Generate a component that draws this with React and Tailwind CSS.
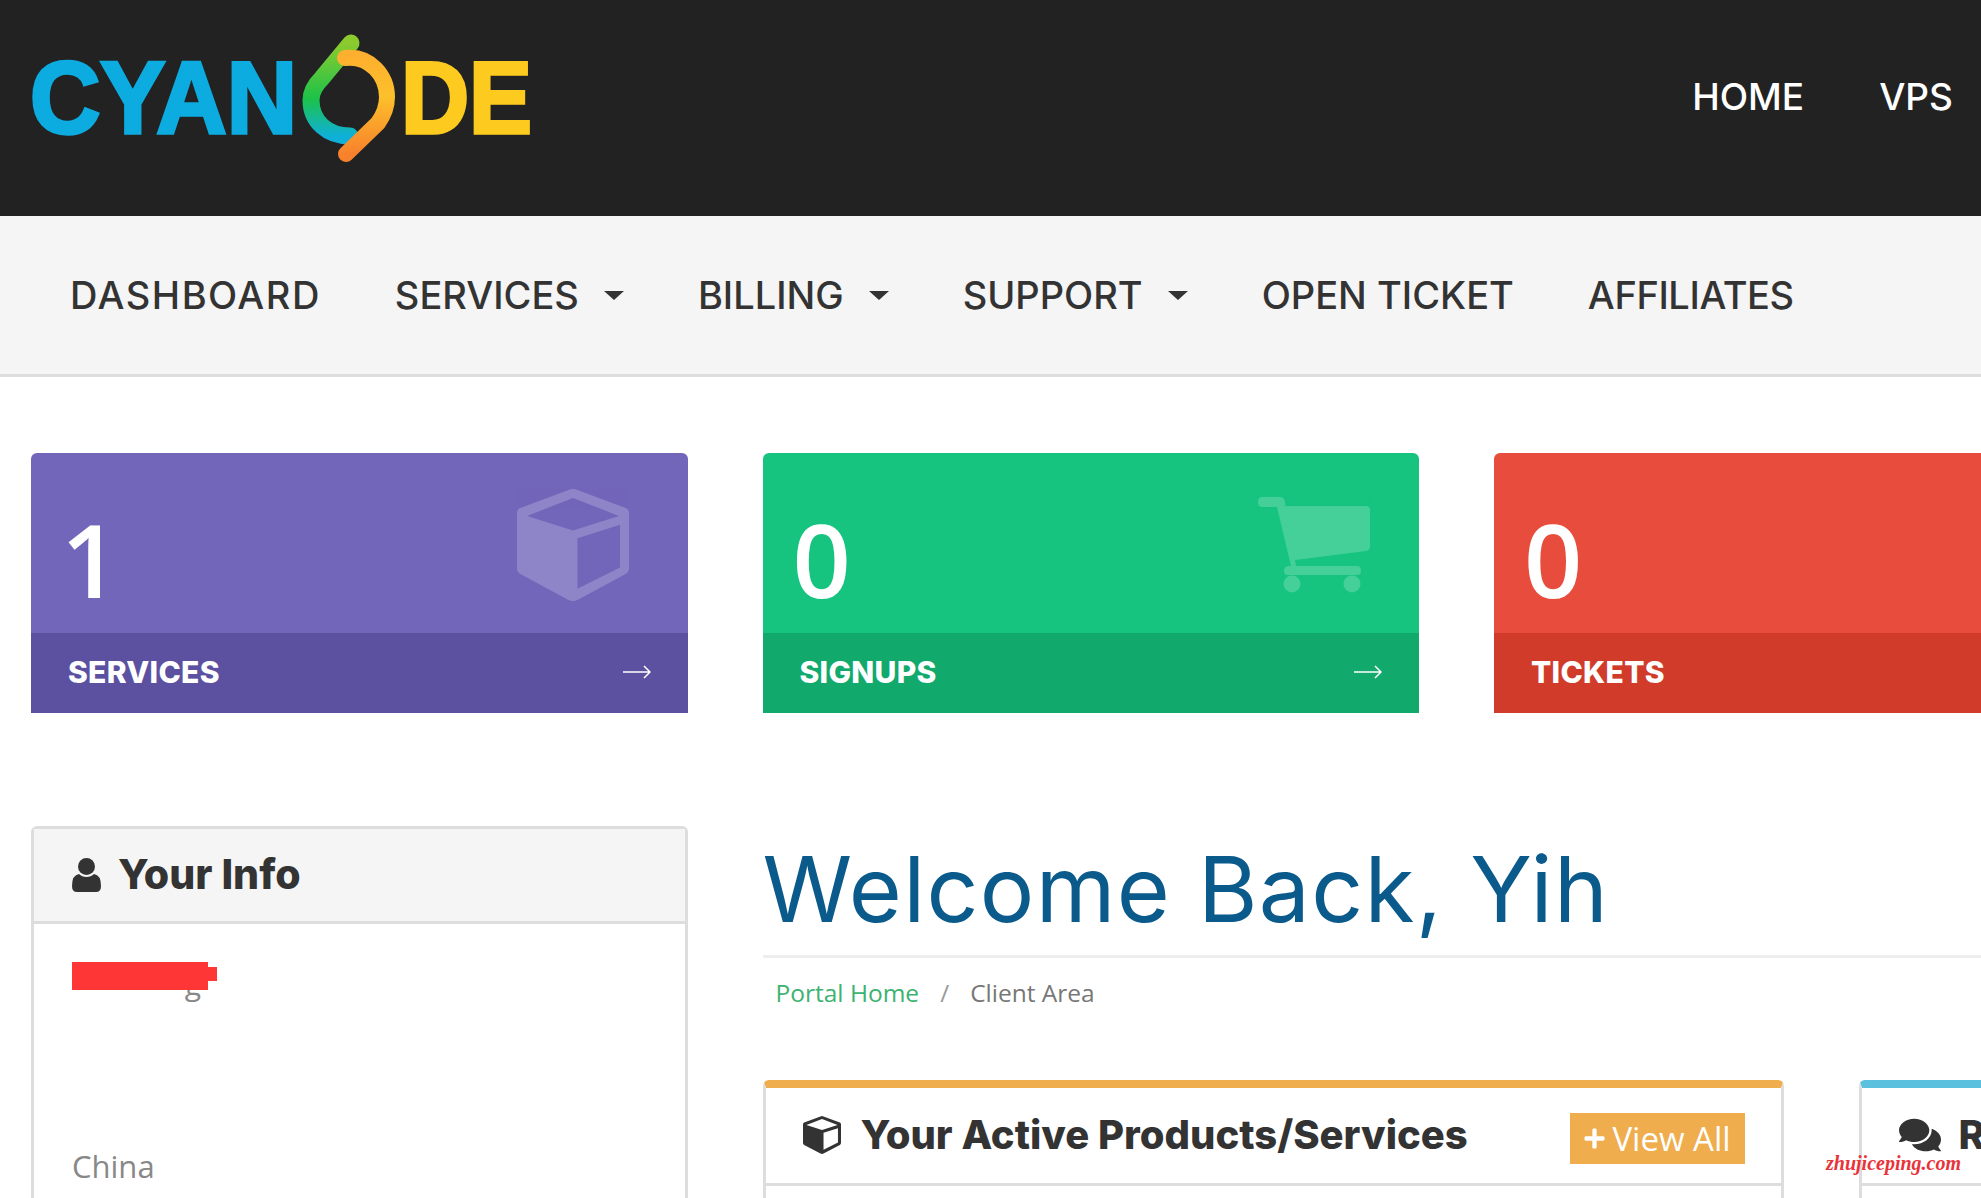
import React from 'react';
import { FaComments, FaPlus } from 'react-icons/fa';

const mont = "font-['Inter',sans-serif]";
const open = "font-['Open_Sans',sans-serif]";

function Logo() {
    return (
        <svg width="560" height="170" viewBox="0 0 560 170" className="block">
            <defs>
                <linearGradient id="ringLeft" x1="0" y1="0" x2="0" y2="1">
                    <stop offset="0" stopColor="#8ccb2e" />
                    <stop offset="0.6" stopColor="#1cc24a" />
                    <stop offset="1" stopColor="#0fb0d8" />
                </linearGradient>
                <linearGradient id="ringRight" x1="0" y1="0" x2="0" y2="1">
                    <stop offset="0" stopColor="#fdb02f" />
                    <stop offset="0.4" stopColor="#fdc02b" />
                    <stop offset="1" stopColor="#f8812c" />
                </linearGradient>
            </defs>
            <text x="30" y="133" textLength="267" lengthAdjust="spacingAndGlyphs" fontFamily="'Liberation Sans', sans-serif" fontWeight="700" fontSize="102" fill="#0cabe0" stroke="#0cabe0" strokeWidth="3.5">CYAN</text>
            <text x="401" y="133" textLength="131" lengthAdjust="spacingAndGlyphs" fontFamily="'Liberation Sans', sans-serif" fontWeight="700" fontSize="102" fill="#fdcb1f" stroke="#fdcb1f" strokeWidth="3.5">DE</text>
            <path d="M351 43 L322 78 C314 86 311 92 311 100 C311 122 328 136 350 136" fill="none" stroke="url(#ringLeft)" strokeWidth="17" strokeLinecap="round" />
            <path d="M345 58 C370 55 387 76 387 97 C387 108 383 116 378 123 L346 154" fill="none" stroke="url(#ringRight)" strokeWidth="16" strokeLinecap="round" />
        </svg>
    );
}

function CubeIcon({ className }) {
    return (
        <svg viewBox="0 0 100 100" className={className} fill="currentColor">
            <path
                fillRule="evenodd"
                d="M46 1 Q50 -1 54 1 L97 17 Q100 18 100 22 V71 Q100 74 97 76 L54 99 Q50 101 46 99 L3 76 Q0 74 0 71 V22 Q0 18 3 17 Z M50 8 L9 24 L50 37 L91 24 Z M54 44 V89 L92 70 V32 Z"
            />
        </svg>
    );
}

function CartIcon({ className }) {
    return (
        <svg viewBox="0 0 112 96" className={className} fill="currentColor">
            <path d="M4 0 H22 Q26 0 27 5 L27.500 9 H108 Q112 9 112 13 V50 Q112 53 108 54 L37 63 L38 69 H99 Q103 69 103 74 Q103 78 99 78 H30 Q26 78 26 74 Q26 70 30 69 L33 69 L19 10 H4 Q0 10 0 5 Q0 0 4 0 Z" />
            <ellipse cx="34" cy="87" rx="8.500" ry="8.500" />
            <ellipse cx="94" cy="87" rx="8.500" ry="8.500" />
        </svg>
    );
}

function UserIcon({ className }) {
    return (
        <svg viewBox="0 0 29 34" className={className} fill="currentColor">
            <circle cx="14.500" cy="8.500" r="8.500" />
            <path d="M7 16 Q10 19 14.500 19 Q19 19 22 16 Q29 17 29 28 Q29 34 24 34 H5 Q0 34 0 28 Q0 17 7 16 Z" />
        </svg>
    );
}

function Caret() {
    return <span className="ml-[25px] inline-block border-x-[10px] border-t-[9px] border-x-transparent border-t-[#333]" />;
}

function NavItem({ label, caret, tracking }) {
    return (
        <a className={`flex items-center px-[37px] text-[38px] font-medium text-[#333] ${tracking} ${mont}`}>
            {label}
            {caret && <Caret />}
        </a>
    );
}

function Arrow() {
    return (
        <svg width="28" height="16" viewBox="0 0 28 16" fill="none" stroke="#fff" strokeWidth="1.5">
            <path d="M0 8h27M21 2l6 6-6 6" />
        </svg>
    );
}

function StatCard({ num, label, bg, foot, icon, arrow }) {
    return (
        <div className="w-[656.500px] shrink-0 overflow-hidden rounded-t-md">
            <div className={`relative flex h-[180px] items-center pl-[30px] pt-[31px] ${bg}`}>
                <span className={`text-[102px] font-semibold leading-none text-white ${open}`}>{num}</span>
                {icon}
            </div>
            <div className={`flex h-[80px] items-center justify-between pb-[2px] pl-[37px] pr-[37px] ${foot}`}>
                <span className={`text-[30px] font-extrabold tracking-[0.3px] text-white ${mont}`}>{label}</span>
                {arrow && <Arrow />}
            </div>
        </div>
    );
}

export default function App() {
    return (
        <div className="relative h-[1198px] w-full overflow-hidden bg-white">
            {/* Top bar */}
            <header className="flex h-[216px] items-start justify-between bg-[#222]">
                <Logo />
                <div className={`flex gap-[75px] pr-[28px] pt-[69px] text-[37px] font-medium text-white ${mont}`}>
                    <a>HOME</a>
                    <a>VPS</a>
                </div>
            </header>

            {/* Main nav */}
            <nav className="flex h-[161px] items-center border-b-[3px] border-[#ddd] bg-[#f5f5f5] pl-[33px]">
                <NavItem label="DASHBOARD" tracking="tracking-[1.500px]" />
                <NavItem label="SERVICES" caret tracking="tracking-normal" />
                <NavItem label="BILLING" caret tracking="tracking-normal" />
                <NavItem label="SUPPORT" caret tracking="tracking-normal" />
                <NavItem label="OPEN TICKET" tracking="tracking-normal" />
                <NavItem label="AFFILIATES" tracking="tracking-[-0.400px]" />
            </nav>

            {/* Stat cards */}
            <div className="flex gap-[75px] pl-[31px] pt-[76px]">
                <StatCard
                    num="1"
                    label="SERVICES"
                    bg="bg-[#7266ba]"
                    foot="bg-[#5c51a0]"
                    arrow
                    icon={<span className="absolute left-[486px] top-[36px] text-white opacity-20"><CubeIcon className="h-[112px] w-[112px]" /></span>}
                />
                <StatCard
                    num="0"
                    label="SIGNUPS"
                    bg="bg-[#16c47f]"
                    foot="bg-[#12a96d]"
                    arrow
                    icon={<span className="absolute left-[495px] top-[44px] text-white opacity-20"><CartIcon className="h-[96px] w-[112px]" /></span>}
                />
                <StatCard
                    num="0"
                    label="TICKETS"
                    bg="bg-[#e74c3c]"
                    foot="bg-[#d13b2a]"
                    icon={<span className="absolute left-[488px] top-[36px] text-white opacity-20"><FaComments size={112} /></span>}
                />
            </div>

            <div className="flex gap-[75px] pl-[31px] pt-[113px]">
                {/* Left column */}
                <aside className="w-[656.500px] shrink-0">
                    <div className="h-[500px] rounded-t-md border-[3px] border-[#ddd]">
                        <div className="flex h-[95px] items-center gap-[17px] border-b-[3px] border-[#ddd] bg-[#f5f5f5] pl-[38px]">
                            <UserIcon className="h-[34px] w-[29px] text-[#333]" />
                            <h3 className={`text-[41px] font-extrabold text-[#333] ${mont}`}>Your Info</h3>
                        </div>
                        <div className="relative pl-[38px]">
                            <div className="relative mt-[38px] h-[34px] w-[145px]">
                                <span className={`absolute bottom-[-3px] right-[16px] text-[30px] leading-none text-[#888] ${open}`}>g</span>
                                <div className="absolute left-0 top-0 h-[28px] w-[136px] bg-[#ff3636]" />
                                <div className="absolute left-0 top-[5px] h-[14px] w-[145px] bg-[#ff3636]" />
                            </div>
                            <p className={`mt-[147px] text-[31px] text-[#888] ${open}`}>China</p>
                        </div>
                    </div>
                </aside>

                {/* Main column */}
                <main className="min-w-0 flex-1">
                    <h1 className={`border-b-[3px] border-[#eee] pb-[6px] pt-[4px] text-[91px] leading-[119px] tracking-[1.300px] text-[#0b5a8c] ${mont}`}>Welcome Back, Yih</h1>
                    <div className={`flex items-center pl-[13px] pt-[17px] text-[24.500px] ${open}`}>
                        <a className="text-[#3cb371]">Portal Home</a>
                        <span className="mx-[21px] text-[#999]">/</span>
                        <span className="text-[#777]">Client Area</span>
                    </div>
                    <div className="mt-[68px] flex gap-[75px]">
                        <div className="h-[300px] w-[1021px] shrink-0 rounded-t-md border-x-[3px] border-b-[3px] border-t-[8px] border-[#ddd] border-t-[#efad4e]">
                            <div className="flex h-[98px] items-center justify-between border-b-[3px] border-[#ddd] pl-[37px] pr-[36px]">
                                <div className="flex items-center gap-[20px]">
                                    <CubeIcon className="h-[38px] w-[38px] text-[#333]" />
                                    <h3 className={`text-[40px] font-extrabold text-[#333] ${mont}`}>Your Active Products/Services</h3>
                                </div>
                                <a className={`mt-[7px] flex h-[51px] w-[175px] items-center justify-center gap-[6px] bg-[#efad4e] text-[33px] text-white ${open}`}>
                                    <FaPlus size={23} />
                                    View All
                                </a>
                            </div>
                        </div>
                        <div className="h-[300px] w-[1020px] shrink-0 rounded-t-md border-x-[3px] border-b-[3px] border-t-[8px] border-[#ddd] border-t-[#5bc0de]">
                            <div className="flex h-[98px] items-center gap-[18px] border-b-[3px] border-[#ddd] pl-[37px]">
                                <FaComments size={42} className="text-[#333]" />
                                <h3 className={`text-[40px] font-extrabold text-[#333] ${mont}`}>Recent Support Tickets</h3>
                            </div>
                        </div>
                    </div>
                </main>
            </div>

            {/* Watermark */}
            <span className="absolute left-[1826px] top-[1148px] font-['Liberation_Serif',serif] text-[20px] font-bold italic text-[#e8333a]">zhujiceping.com</span>
        </div>
    );
}
